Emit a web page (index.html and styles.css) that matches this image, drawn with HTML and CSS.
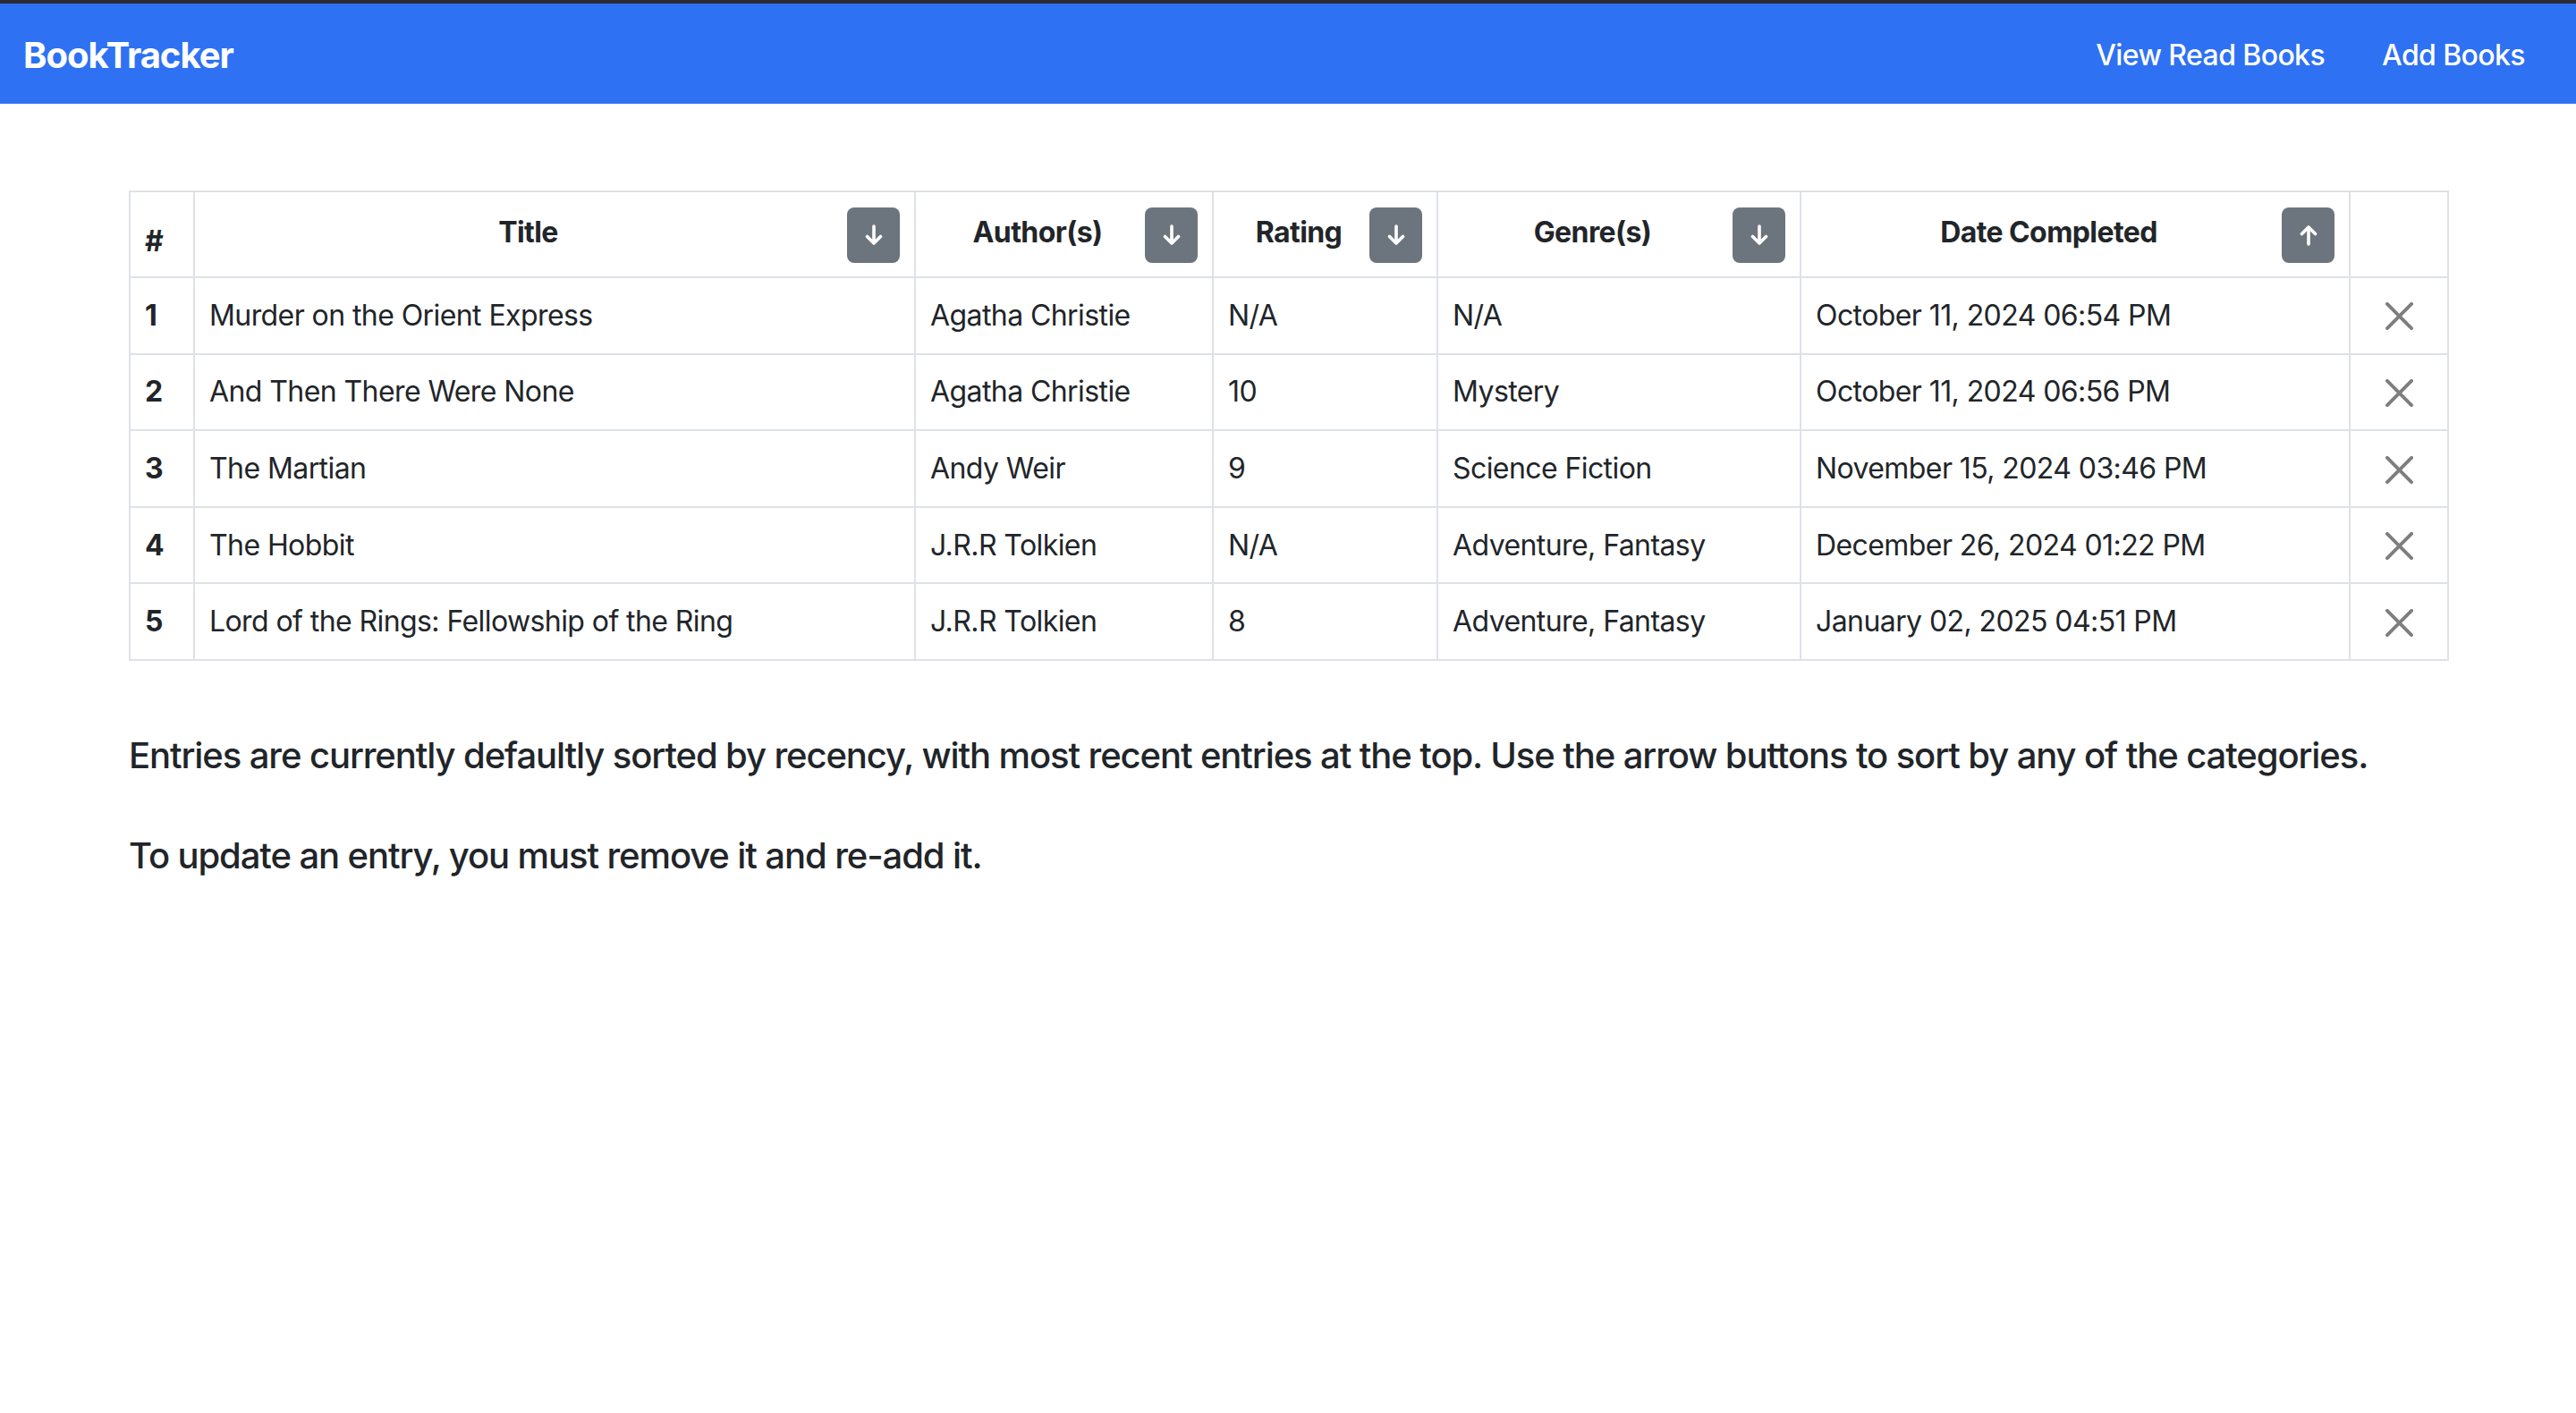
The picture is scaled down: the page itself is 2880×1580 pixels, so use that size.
FILE: index.html
```html
<!DOCTYPE html>
<html lang="en">
<head>
<meta charset="utf-8">
<title>BookTracker</title>
<link rel="stylesheet" href="styles.css">
</head>
<body>
<div class="chrome"></div>
<nav class="navbar">
  <a class="brand" href="#">BookTracker</a>
  <div class="nav-links">
    <a class="nav-link" href="#">View Read Books</a>
    <a class="nav-link" href="#">Add Books</a>
  </div>
</nav>
<main class="container">
  <table class="books">
    <colgroup>
      <col class="c-num"><col class="c-title"><col class="c-author"><col class="c-rating"><col class="c-genre"><col class="c-date"><col class="c-del">
    </colgroup>
    <thead>
      <tr>
        <th class="num">#</th>
        <th><div class="th-inner"><span class="th-label">Title</span><button class="sort"><svg viewBox="0 0 20 24"><path d="M10 2v19M2.5 13.5 10 21l7.5-7.5"/></svg></button></div></th>
        <th><div class="th-inner"><span class="th-label">Author(s)</span><button class="sort"><svg viewBox="0 0 20 24"><path d="M10 2v19M2.5 13.5 10 21l7.5-7.5"/></svg></button></div></th>
        <th><div class="th-inner"><span class="th-label">Rating</span><button class="sort"><svg viewBox="0 0 20 24"><path d="M10 2v19M2.5 13.5 10 21l7.5-7.5"/></svg></button></div></th>
        <th><div class="th-inner"><span class="th-label">Genre(s)</span><button class="sort"><svg viewBox="0 0 20 24"><path d="M10 2v19M2.5 13.5 10 21l7.5-7.5"/></svg></button></div></th>
        <th><div class="th-inner"><span class="th-label">Date Completed</span><button class="sort"><svg viewBox="0 0 20 24"><path d="M10 22V3M2.5 10.5 10 3l7.5 7.5"/></svg></button></div></th>
        <th></th>
      </tr>
    </thead>
    <tbody>
      <tr>
        <th class="row-num">1</th><td>Murder on the Orient Express</td><td>Agatha Christie</td><td>N/A</td><td>N/A</td><td>October 11, 2024 06:54 PM</td>
        <td class="del"><button class="close"><svg viewBox="0 0 16 16"><path d="M.293.293a1 1 0 0 1 1.414 0L8 6.586 14.293.293a1 1 0 1 1 1.414 1.414L9.414 8l6.293 6.293a1 1 0 0 1-1.414 1.414L8 9.414l-6.293 6.293a1 1 0 0 1-1.414-1.414L6.586 8 .293 1.707a1 1 0 0 1 0-1.414"/></svg></button></td>
      </tr>
      <tr>
        <th class="row-num">2</th><td>And Then There Were None</td><td>Agatha Christie</td><td>10</td><td>Mystery</td><td>October 11, 2024 06:56 PM</td>
        <td class="del"><button class="close"><svg viewBox="0 0 16 16"><path d="M.293.293a1 1 0 0 1 1.414 0L8 6.586 14.293.293a1 1 0 1 1 1.414 1.414L9.414 8l6.293 6.293a1 1 0 0 1-1.414 1.414L8 9.414l-6.293 6.293a1 1 0 0 1-1.414-1.414L6.586 8 .293 1.707a1 1 0 0 1 0-1.414"/></svg></button></td>
      </tr>
      <tr>
        <th class="row-num">3</th><td>The Martian</td><td>Andy Weir</td><td>9</td><td>Science Fiction</td><td>November 15, 2024 03:46 PM</td>
        <td class="del"><button class="close"><svg viewBox="0 0 16 16"><path d="M.293.293a1 1 0 0 1 1.414 0L8 6.586 14.293.293a1 1 0 1 1 1.414 1.414L9.414 8l6.293 6.293a1 1 0 0 1-1.414 1.414L8 9.414l-6.293 6.293a1 1 0 0 1-1.414-1.414L6.586 8 .293 1.707a1 1 0 0 1 0-1.414"/></svg></button></td>
      </tr>
      <tr>
        <th class="row-num">4</th><td>The Hobbit</td><td>J.R.R Tolkien</td><td>N/A</td><td>Adventure, Fantasy</td><td>December 26, 2024 01:22 PM</td>
        <td class="del"><button class="close"><svg viewBox="0 0 16 16"><path d="M.293.293a1 1 0 0 1 1.414 0L8 6.586 14.293.293a1 1 0 1 1 1.414 1.414L9.414 8l6.293 6.293a1 1 0 0 1-1.414 1.414L8 9.414l-6.293 6.293a1 1 0 0 1-1.414-1.414L6.586 8 .293 1.707a1 1 0 0 1 0-1.414"/></svg></button></td>
      </tr>
      <tr>
        <th class="row-num">5</th><td>Lord of the Rings: Fellowship of the Ring</td><td>J.R.R Tolkien</td><td>8</td><td>Adventure, Fantasy</td><td>January 02, 2025 04:51 PM</td>
        <td class="del"><button class="close"><svg viewBox="0 0 16 16"><path d="M.293.293a1 1 0 0 1 1.414 0L8 6.586 14.293.293a1 1 0 1 1 1.414 1.414L9.414 8l6.293 6.293a1 1 0 0 1-1.414 1.414L8 9.414l-6.293 6.293a1 1 0 0 1-1.414-1.414L6.586 8 .293 1.707a1 1 0 0 1 0-1.414"/></svg></button></td>
      </tr>
    </tbody>
  </table>
  <h5 class="note">Entries are currently defaultly sorted by recency, with most recent entries at the top. Use the arrow buttons to sort by any of the categories.</h5>
  <h5 class="note">To update an entry, you must remove it and re-add it.</h5>
</main>
</body>
</html>
```
FILE: styles.css
```css
* { box-sizing: border-box; }

html, body {
  margin: 0;
  padding: 0;
  background: #ffffff;
}

body {
  font-family: Inter, "Liberation Sans", Arial, sans-serif;
  font-size: 32px;
  line-height: 48px;
  color: #212529;
}

.chrome {
  height: 4px;
  background: #2b2a31;
}

.navbar {
  height: 112px;
  background: #2e71f3;
  display: flex;
  align-items: center;
  justify-content: space-between;
  padding: 3px 57px 0 26px;
}

.brand {
  color: #ffffff;
  text-decoration: none;
  font-size: 40px;
  font-weight: 700;
  letter-spacing: -1px;
  line-height: 60px;
}

.nav-links {
  display: flex;
  gap: 64px;
}

.nav-link {
  color: #ffffff;
  text-decoration: none;
  font-size: 32px;
  font-weight: 500;
  letter-spacing: -0.6px;
}

.container {
  width: 2640px;
  margin: 0 auto;
  padding: 97px 24px 0;
}

.books {
  width: 100%;
  border-collapse: collapse;
  table-layout: fixed;
  letter-spacing: -0.58px;
}

.c-num { width: 72px; }
.c-title { width: 806px; }
.c-author { width: 333px; }
.c-rating { width: 251px; }
.c-genre { width: 406px; }
.c-date { width: 614px; }
.c-del { width: 110px; }

.books th,
.books td {
  border: 2px solid #dee2e6;
  padding: 16px;
  text-align: left;
  vertical-align: middle;
  font-weight: 400;
}

.books thead th {
  height: 96px;
  font-weight: 700;
  vertical-align: bottom;
  padding: 16px 16px 15px;
}

.books tbody td,
.books tbody th {
  height: 85.6px;
}

.books .row-num {
  font-weight: 700;
}

.th-inner {
  display: flex;
  align-items: center;
}

.th-label {
  flex: 1;
  text-align: center;
  margin-top: -6px;
}

.sort {
  width: 59px;
  height: 62px;
  border: none;
  border-radius: 8px;
  background: #6c757d;
  padding: 0;
  display: flex;
  align-items: center;
  justify-content: center;
}

.sort svg {
  width: 20px;
  height: 24px;
  fill: none;
  stroke: #ffffff;
  stroke-width: 3.6;
  stroke-linecap: round;
  stroke-linejoin: round;
}

.del {
  text-align: center !important;
}

.close {
  width: 48px;
  height: 48px;
  border: none;
  background: transparent;
  padding: 8px;
  opacity: 0.5;
  display: inline-flex;
  align-items: center;
  justify-content: center;
  vertical-align: middle;
}

.close svg {
  width: 31px;
  height: 31px;
  fill: #000000;
}

.note {
  font-size: 40px;
  font-weight: 500;
  line-height: 48px;
  margin: 0;
  letter-spacing: -1.1px;
  white-space: nowrap;
}

.books + .note {
  margin-top: 82px;
}

.note + .note {
  margin-top: 64px;
}
```
